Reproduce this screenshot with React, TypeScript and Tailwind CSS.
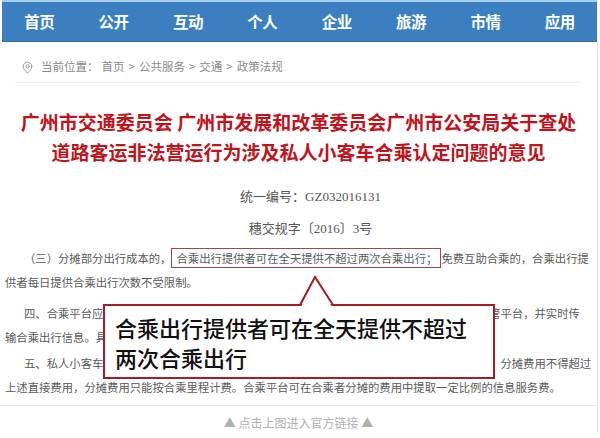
import { MapPin } from 'lucide-react';

const navItems = ['首页', '公开', '互动', '个人', '企业', '旅游', '市情', '应用'];

export default function App() {
  return (
    <div className="relative w-[600px] h-[438px] overflow-hidden bg-white font-['Noto_Sans_CJK_SC',sans-serif]">
      {/* top nav */}
      <div className="h-[2px] ml-[2px] w-[595px] bg-[#a6cfee]" />
      <nav className="flex h-[40px] ml-[2px] w-[595px] bg-[#3b7fc1] border-b border-[#2f6ba8]">
        {navItems.map((item) => (
          <div
            key={item}
            className="flex-1 flex items-center justify-center text-white font-bold text-[15.5px] tracking-[-0.5px]"
          >
            {item}
          </div>
        ))}
      </nav>

      <div className="w-[598px] border-r border-[#e4e4e4] overflow-hidden">
        {/* breadcrumb */}
        <div className="flex items-center h-[41px] pt-[10px] ml-[15px] mr-[17px] border-b border-[#eeeeee] pl-[6px] text-[11.5px] text-[#8a8a8a]">
          <MapPin size={13} strokeWidth={1.6} className="text-[#8a8a8a] mr-[7px]" />
          <span>当前位置：</span>
          <span className="ml-[3px]">首页</span>
          <span className="mx-[4px]">&gt;</span>
          <span>公共服务</span>
          <span className="mx-[4px]">&gt;</span>
          <span>交通</span>
          <span className="mx-[4px]">&gt;</span>
          <span>政策法规</span>
        </div>

        {/* title */}
        <h1 className="mt-[24px] text-center text-[19px] leading-[30px] font-bold text-[#c0141c] whitespace-nowrap">
          <div>广州市交通委员会 广州市发展和改革委员会广州市公安局关于查处</div>
          <div>道路客运非法营运行为涉及私人小客车合乘认定问题的意见</div>
        </h1>

        <div className="pl-[24px] text-center text-[13px] leading-[20px] text-[#555] font-['Liberation_Serif','Noto_Sans_CJK_SC',serif]">
          <div className="mt-[20px]">统一编号：GZ032016131</div>
          <div className="mt-[12px]">穗交规字〔2016〕3号</div>
        </div>

        {/* body */}
        <div className="mt-[7px] pl-[5px] text-[11.35px] leading-[24px] text-[#5a5a5a] whitespace-nowrap">
          <div className="pl-[19px]">
            （三）分摊部分出行成本的，
            <span className="border border-[#a4454c] pl-[4px] pr-[3px] py-[1px]">
              合乘出行提供者可在全天提供不超过两次合乘出行；
            </span>
            免费互助合乘的，合乘出行提
          </div>
          <div>供者每日提供合乘出行次数不受限制。</div>

          <div className="mt-[7px] pl-[19px]">
            四、合乘平台应当将合乘出行提供者、合乘者及合乘出行的相关信息接入交通运输主管部门监管平台，并实时传
          </div>
          <div>输合乘出行信息。具体管理办法由市交通运输主管部门另行制定。</div>

          <div className="mt-[2px] pl-[19px]">
            五、私人小客车合乘出行提供者与合乘者分摊的费用仅限于燃料成本及道路通行费等直接费用，分摊费用不得超过
          </div>
          <div>上述直接费用，分摊费用只能按合乘里程计费。合乘平台可在合乘者分摊的费用中提取一定比例的信息服务费。</div>
        </div>

        <div className="mt-[6px] border-t border-[#e8e8e8]" />
        <div className="mt-[7px] text-center text-[12px] leading-[20px] text-[#b0b0b0]">
          ▲ 点击上图进入官方链接 ▲
        </div>
      </div>

      {/* callout */}
      <div className="absolute left-[103px] top-[304px] w-[392px] h-[75px] border-2 border-[#a61c24] bg-white pl-[10px] pt-[6px] text-[22px] leading-[30px] font-medium text-[#111] whitespace-nowrap">
        <div>合乘出行提供者可在全天提供不超过</div>
        <div>两次合乘出行</div>
      </div>
      <svg className="absolute left-[294px] top-[273px]" width="44" height="36" viewBox="0 0 44 36">
        <polygon points="7,34 21,5 38,34" fill="#ffffff" />
        <polyline points="6,32 21,4 39,32" fill="none" stroke="#a61c24" strokeWidth="2" strokeLinejoin="miter" />
      </svg>
    </div>
  );
}
